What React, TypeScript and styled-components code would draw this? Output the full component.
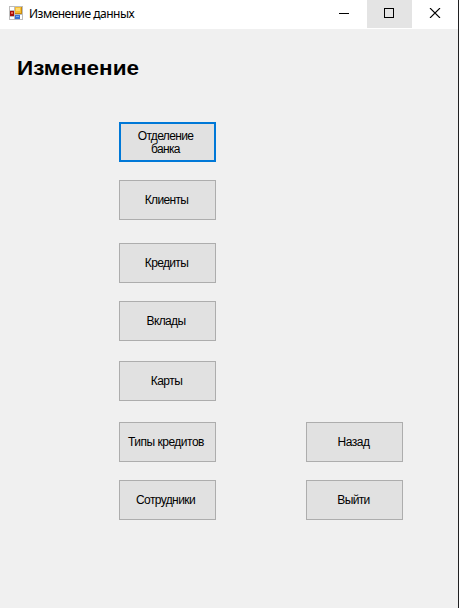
import React from 'react';
import styled, { createGlobalStyle } from 'styled-components';

const GlobalStyle = createGlobalStyle`
  * { box-sizing: border-box; }
  html, body { margin: 0; padding: 0; overflow: hidden; }
`;

const Window = styled.div`
  width: 459px;
  height: 608px;
  display: flex;
  flex-direction: column;
  background: #f0f0f0;
  border-right: 1px solid #202022;
  color: #000;
`;

const TitleBar = styled.header`
  display: flex;
  height: 29px;
  flex: none;
  padding-left: 9px;
  background: #fff;
`;

const AppIcon = styled.svg`
  flex: none;
  margin-top: 6px;
`;

const Caption = styled.div`
  flex: 1;
  padding-left: 6px;
  font: 12px/28px 'Noto Sans', sans-serif;
  letter-spacing: -0.5px;
  white-space: nowrap;
`;

const CaptionButton = styled.button<{ $hot?: boolean; $width?: number }>`
  flex: none;
  width: ${(p) => p.$width ?? 45}px;
  height: 28px;
  padding: 8px 0 0 17px;
  border: 0;
  display: flex;
  background: ${(p) => (p.$hot ? '#e4e4e4' : '#fff')};
`;

const Heading = styled.h1`
  align-self: flex-start;
  margin: 25px 0 0 17px;
  height: 28px;
  font: bold 20px/28px 'Liberation Sans', Arial, sans-serif;
  transform: scaleX(1.125);
  transform-origin: left center;
  white-space: nowrap;
`;

const Form = styled.main`
  display: flex;
  align-items: flex-end;
  gap: 90px;
  width: 284px;
  height: 398px;
  margin: 40px 0 0 119px;
`;

const Column = styled.div`
  display: flex;
  flex-direction: column;
  width: 97px;
`;

const FormButton = styled.button<{ $gap: number; $focused?: boolean }>`
  width: 97px;
  height: 40px;
  flex: none;
  margin: ${(p) => p.$gap}px 0 0;
  padding: ${(p) => (p.$focused ? '2px 0 0' : '0')};
  display: flex;
  align-items: center;
  justify-content: center;
  background: #e1e1e1;
  border: ${(p) => (p.$focused ? '2px solid #0078d7' : '1px solid #adadad')};
  border-radius: 0;
  color: #000;
`;

const Label = styled.span<{ $spacing: number; $shift?: number }>`
  font: 12px/13px 'Liberation Sans', Arial, sans-serif;
  letter-spacing: ${(p) => p.$spacing}px;
  text-align: center;
  white-space: pre-line;
  padding-right: ${(p) => p.$shift ?? 2}px;
`;

type Item = { text: string; gap: number; spacing: number; shift?: number; focused?: boolean };

const sections: Item[] = [
  { text: 'Отделение\nбанка', gap: 0, spacing: -0.65, shift: 4, focused: true },
  { text: 'Клиенты', gap: 18, spacing: -0.65, shift: 2 },
  { text: 'Кредиты', gap: 23, spacing: -0.65, shift: 2 },
  { text: 'Вклады', gap: 18, spacing: -0.65, shift: 3 },
  { text: 'Карты', gap: 20, spacing: -0.55, shift: 2 },
  { text: 'Типы кредитов', gap: 21, spacing: -0.5, shift: 3 },
  { text: 'Сотрудники', gap: 18, spacing: -0.6, shift: 4 },
];

const navigation: Item[] = [
  { text: 'Назад', gap: 0, spacing: -0.5, shift: 2 },
  { text: 'Выйти', gap: 18, spacing: -0.65, shift: 2 },
];

const ButtonColumn = ({ items }: { items: Item[] }) => (
  <Column>
    {items.map((i) => (
      <FormButton key={i.text} $gap={i.gap} $focused={i.focused}>
        <Label $spacing={i.spacing} $shift={i.shift}>{i.text}</Label>
      </FormButton>
    ))}
  </Column>
);

export default function App() {
  return (
    <Window>
      <GlobalStyle />
      <TitleBar>
        <AppIcon width="14" height="14" viewBox="0 0 14 14" shapeRendering="crispEdges">
          <rect width="14" height="14" fill="#bdbdbd" />
          <rect x="1" y="1" width="4" height="3" fill="#fff" />
          <rect x="1" y="11" width="4" height="2" fill="#fff" />
          <rect x="11" y="9" width="2" height="4" fill="#fff" />
          <rect x="6" y="1" width="7" height="7" fill="#c78b10" />
          <rect x="6" y="1" width="6" height="6" fill="#f5bd32" />
          <rect x="7" y="2" width="4" height="3" fill="#ffdc72" />
          <rect x="1" y="5" width="4" height="5" fill="#a51009" />
          <rect x="2" y="6" width="2" height="2" fill="#ed6550" />
          <rect x="6" y="9" width="5" height="4" fill="#3972cf" />
          <rect x="7" y="10" width="3" height="1" fill="#77aaf0" />
        </AppIcon>
        <Caption>Изменение данных</Caption>
        <CaptionButton aria-label="Свернуть">
          <svg width="10" height="10" shapeRendering="crispEdges">
            <path d="M0 5.5H10" stroke="#000" />
          </svg>
        </CaptionButton>
        <CaptionButton $hot aria-label="Развернуть">
          <svg width="10" height="10" shapeRendering="crispEdges">
            <rect x=".5" y=".5" width="9" height="9" fill="none" stroke="#000" />
          </svg>
        </CaptionButton>
        <CaptionButton $width={46} aria-label="Закрыть">
          <svg width="12" height="10" viewBox="-1 0 12 10">
            <path d="M0 0L10 10M10 0L0 10" stroke="#000" strokeWidth="1.1" />
          </svg>
        </CaptionButton>
      </TitleBar>
      <Heading>Изменение</Heading>
      <Form>
        <ButtonColumn items={sections} />
        <ButtonColumn items={navigation} />
      </Form>
    </Window>
  );
}
